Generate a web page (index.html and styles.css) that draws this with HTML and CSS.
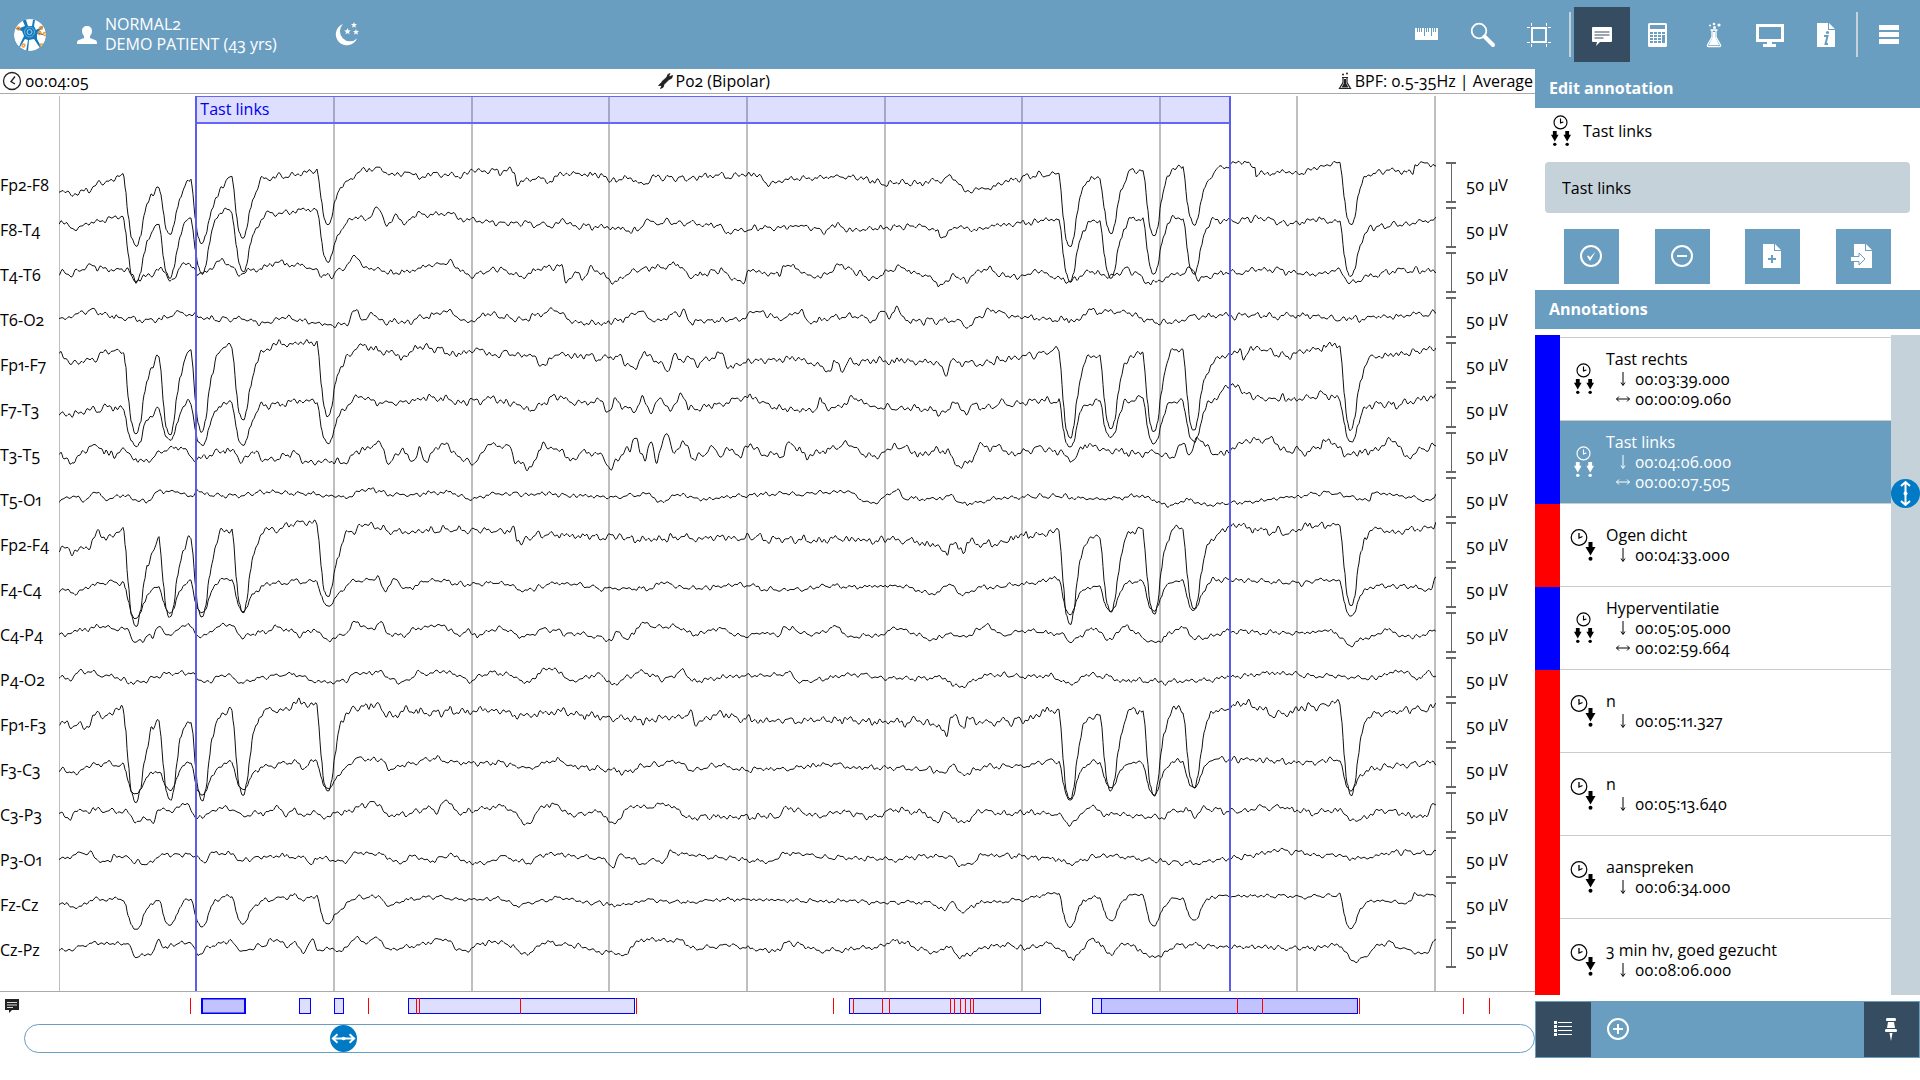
FILE: index.html
```html
<!DOCTYPE html>
<html lang="en">
<head>
<meta charset="utf-8">
<title>EEG review – NORMAL2</title>
<link rel="stylesheet" href="styles.css">
</head>
<body>
<svg class="sprite" aria-hidden="true">
  <symbol id="i-span" viewBox="0 0 22 32">
    <circle cx="11" cy="7" r="6.800" fill="none" stroke="currentColor" stroke-width="1.200"/>
    <path d="M11 3v4.500l3-1" fill="none" stroke="currentColor" stroke-width="1.200"/>
    <path d="M3 16h4v4h2l-4 7-4-7h2zM16 16h4v4h2l-4 7-4-7h2z" fill="currentColor"/>
    <circle cx="5" cy="30" r="1.800" fill="currentColor"/><circle cx="18" cy="30" r="1.800" fill="currentColor"/>
  </symbol>
  <symbol id="i-point" viewBox="0 0 26 32">
    <circle cx="9" cy="8.500" r="7.800" fill="none" stroke="currentColor" stroke-width="1.200"/>
    <path d="M9 4v5l3.500-1.500" fill="none" stroke="currentColor" stroke-width="1.300"/>
    <path d="M18.500 13h4v5h3l-5 8.500-5-8.500h3z" fill="currentColor"/>
    <circle cx="20.500" cy="29.800" r="2" fill="currentColor"/>
  </symbol>
  <symbol id="i-down" viewBox="0 0 16 16"><path d="M8 1v13M6 11.500l2 3 2-3" fill="none" stroke="currentColor"/></symbol>
  <symbol id="i-wide" viewBox="0 0 16 16"><path d="M1.500 8h13M4 5.500L1.500 8 4 10.500M12 5.500L14.500 8 12 10.500" fill="none" stroke="currentColor"/></symbol>
</svg>

<header class="topbar">
  <svg class="logo" viewBox="0 0 32 32" role="img" aria-label="Logo">
    <clipPath id="lc"><circle cx="16" cy="16" r="16"/></clipPath>
    <g clip-path="url(#lc)">
      <circle cx="16" cy="16" r="16" fill="#fff"/>
      <path d="M8 0l3 7-5 2-4 0 0 1 6 2 2 5-3 6-2 5 1 0 5-8 3 1 -1 6-1 6h2l1-12 5-1 6 9 2 3 1-1-6-11 0-5 6 1 0-1-5-2 5-5 0-1-7 4-2-4 1-6h-2l-1 6-4 0-2-6z" fill="#1478be"/>
      <circle cx="15.500" cy="13" r="5" fill="none" stroke="#6ab0dd"/><circle cx="15.500" cy="13" r="2.500" fill="none" stroke="#9fd0ee"/>
      <g fill="none" stroke="#f0962e" stroke-width="1.300"><circle cx="4.500" cy="9.500" r="1.500"/><circle cx="27" cy="9" r="1.500"/><circle cx="25.500" cy="14" r="1.500"/><circle cx="31" cy="15" r="1.500"/><circle cx="9.500" cy="26.500" r="1.500"/><circle cx="27.500" cy="26.500" r="1.500"/></g>
    </g>
  </svg>
  <svg class="user" viewBox="0 0 20 20" aria-hidden="true"><path d="M10 1c3 0 5 2 5 5 0 2-1 4-2 5v2l5 2c2 .6 2 2 2 4H0c0-2 0-3.400 2-4l5-2v-2C6 10 5 8 5 6c0-3 2-5 5-5z" fill="#fff"/></svg>
  <div class="patient"><div>NORMAL2</div><div>DEMO PATIENT (43 yrs)</div></div>
  <button class="night" aria-label="Night mode"><svg viewBox="0 0 26 26"><path d="M9 2a11 11 0 1 0 14 14.500A8.800 8.800 0 0 1 9 2z" fill="#fff"/><path d="M20 0l.8 2 2.200.1-1.700 1.400.6 2.200L20 4.500l-1.900 1.200.6-2.200L17 2.100l2.200-.1zM13.500 6l.9 2.300 2.400.1-1.900 1.500.7 2.400-2.100-1.400-2.100 1.400.7-2.400-1.900-1.500 2.400-.1zM22 7l.8 2 2.200.1-1.700 1.400.6 2.200-1.900-1.200-1.900 1.200.6-2.200L19 9.100l2.200-.1z" fill="#fff"/></svg></button>
  <nav class="tools">
    <button aria-label="Ruler"><svg viewBox="0 0 28 28"><path d="M2 7h2v4h1V7h1v4h1V7h1v4h1V7h2v8h1V7h1v4h1V7h1v4h1V7h2v8h1V7h1v4h1V7h1v4h1V7h2v12H2z" fill="#fff"/></svg></button>
    <button aria-label="Zoom"><svg viewBox="0 0 28 28"><circle cx="10" cy="10" r="7.300" fill="none" stroke="#fff" stroke-width="1.800"/><path d="M15.500 15.500L24 24" stroke="#fff" stroke-width="4" stroke-linecap="round"/></svg></button>
    <button aria-label="Crop"><svg viewBox="0 0 28 28"><path d="M7 7h14v14H7z" fill="none" stroke="#fff" stroke-width="2"/><path d="M2 6.500h3M23 6.500h3M2 21.500h3M23 21.500h3M6.500 2v3M21.500 2v3M6.500 23v3M21.500 23v3" stroke="#fff"/></svg></button>
    <span class="sep"></span>
    <button class="active" aria-label="Annotations"><svg viewBox="0 0 28 28"><path d="M5 6h18q1 0 1 1v13q0 1-1 1H12l-4 4 1-4H5q-1 0-1-1V7q0-1 1-1z" fill="#fff"/><path d="M6.500 11h15M6.500 14h15M6.500 17h9" stroke="#364d61"/></svg></button>
    <button aria-label="Calculator"><svg viewBox="0 0 28 28"><rect x="4" y="2" width="19" height="24" rx="1.500" fill="#fff"/><path d="M6 4h15v4H6zM6 11h3v2H6zM10 11h3v2h-3zM14 11h3v2h-3zM18 11h3v2h-3zM6 14h3v2H6zM10 14h3v2h-3zM14 14h3v2h-3zM6 17h3v2H6zM10 17h3v2h-3zM14 17h3v2h-3zM6 20h3v2H6zM10 20h3v2h-3zM14 20h3v2h-3zM18 14h3v8h-3z" fill="#6a9ec1"/></svg></button>
    <button aria-label="Laboratory"><svg viewBox="0 0 28 28"><path d="M12 9v7l-4.500 8q-.5 1.500 1 1.500h11q1.500 0 1-1.500L16 16V9M10.500 9h7" fill="none" stroke="#fff" stroke-width="1.300"/><path d="M12.800 16h2.400l4 8h-10.400zM12.800 11h2.400v5h-2.400z" fill="#fff"/><circle cx="10" cy="4.500" r="1" fill="#fff"/><circle cx="14" cy="3" r="1.300" fill="#fff"/><circle cx="19" cy="4" r="1.600" fill="#fff"/><circle cx="14.500" cy="6.500" r="1.500" fill="#fff"/></svg></button>
    <button aria-label="Display"><svg viewBox="0 0 28 28"><path d="M0 3h28v18H16v2h4v3H7v-3h4v-2H0zM3 6v12h22V6z" fill="#fff" fill-rule="evenodd"/></svg></button>
    <button aria-label="Info"><svg viewBox="0 0 28 28"><path d="M5 2h11v7h7v17H5zM17 2l6 6h-6z" fill="#fff"/><circle cx="15.500" cy="11.500" r="1.600" fill="#6a9ec1"/><path d="M12 15h3.500l-2 8h2.500" fill="none" stroke="#6a9ec1" stroke-width="2"/></svg></button>
    <span class="sep"></span>
    <button aria-label="Menu"><svg viewBox="0 0 28 28"><path d="M4 4h20v5H4zM4 11h20v5H4zM4 18h20v5H4z" fill="#fff"/></svg></button>
  </nav>
</header>

<main class="workspace">
  <section class="recording">
    <div class="infobar">
      <span class="info"><svg width="20" height="20" viewBox="0 0 20 20"><circle cx="10" cy="10" r="8.500" fill="none" stroke="#222" stroke-width="1.300"/><path d="M13 5.500L9 10.500l4 2.500" fill="none" stroke="#222" stroke-width="1.400"/></svg>00:04:05</span>
      <span class="info"><svg width="16" height="16" viewBox="0 0 16 16"><path d="M1.500 12.500l3-3 .5-1 5-4.500q0-3 3-3.500L12 2.500l1 1 2.500-1q0 3.500-3.500 4l-5 5q0 3.500-3.500 4l1-2-1-1z" fill="#222" stroke="#222" stroke-width=".8"/></svg>P02 (Bipolar)</span>
      <span class="info"><svg width="14" height="18" viewBox="0 0 14 18"><path d="M5 5.500v5L1.500 16.500h11L9 10.500v-5M4 5.500h6" fill="none" stroke="#222" stroke-width="1.200"/><path d="M6 7h2v4l2.500 4.500h-7L6 11z" fill="#222"/><circle cx="5" cy="2.500" r="1" fill="#222"/><circle cx="9" cy="1.500" r="1" fill="#222"/></svg>BPF: 0.5-35Hz | Average</span>
    </div>
    <div class="chart">
      <div class="labels">
        <div>Fp2-F8</div><div>F8-T4</div><div>T4-T6</div><div>T6-O2</div><div>Fp1-F7</div><div>F7-T3</div><div>T3-T5</div><div>T5-O1</div><div>Fp2-F4</div><div>F4-C4</div><div>C4-P4</div><div>P4-O2</div><div>Fp1-F3</div><div>F3-C3</div><div>C3-P3</div><div>P3-O1</div><div>Fz-Cz</div><div>Cz-Pz</div>
      </div>
      <div class="plot">
        <svg class="traces" id="traces" viewBox="0 0 1377 897" preserveAspectRatio="none" role="img" aria-label="EEG traces"></svg>
        <div class="marked"><span>Tast links</span></div>
      </div>
      <div class="scales">
        <div>50 µV</div><div>50 µV</div><div>50 µV</div><div>50 µV</div><div>50 µV</div><div>50 µV</div><div>50 µV</div><div>50 µV</div><div>50 µV</div><div>50 µV</div><div>50 µV</div><div>50 µV</div><div>50 µV</div><div>50 µV</div><div>50 µV</div><div>50 µV</div><div>50 µV</div><div>50 µV</div>
      </div>
    </div>
    <div class="timeline">
      <svg width="16" height="16" viewBox="0 0 16 16" aria-hidden="true"><path d="M1 1h14v11H8l-3 3v-3H1z" fill="#222"/><path d="M3 4.500h10M3 7h10M3 9.500h6" stroke="#ddd"/></svg>
      <svg class="track" viewBox="0 0 1511 16" preserveAspectRatio="none">
        <g stroke="#0000ff" fill="#dedeff">
          <rect x="178" y=".5" width="43" height="15" fill="#c2c2ff" stroke-width="2"/>
          <rect x="275.500" y=".5" width="11" height="15"/><rect x="310.500" y=".5" width="9" height="15"/>
          <rect x="384.500" y=".5" width="226" height="15"/><rect x="825.500" y=".5" width="191" height="15"/>
          <rect x="1068.500" y=".5" width="265" height="15"/><rect x="1077.500" y=".5" width="256" height="15" fill="#c2c2ff"/>
        </g>
        <path stroke="#ff0000" d="M166.500 0v16M344.500 0v16M392.500 0v16M395.500 0v16M496.500 0v16M612.500 0v16M809.500 0v16M829.500 0v16M858.500 0v16M865.500 0v16M926.500 0v16M930.500 0v16M936.500 0v16M941.500 0v16M946.500 0v16M949.500 0v16M1213.500 0v16M1238.500 0v16M1335.500 0v16M1439.500 0v16M1465.500 0v16"/>
      </svg>
    </div>
    <input class="seek" type="range" min="0" max="1000" value="206" aria-label="Position in recording">
  </section>

  <aside class="side">
    <h2>Edit annotation</h2>
    <div class="kind"><svg class="span"><use href="#i-span"/></svg><span>Tast links</span></div>
    <input class="name" type="text" value="Tast links" aria-label="Annotation text">
    <div class="actions">
      <button aria-label="Accept"><svg viewBox="0 0 26 26"><circle cx="13" cy="13" r="10" fill="none" stroke="#fff" stroke-width="2"/><path d="M9 13l1.500-.5 1.500 2 5.500-6-5 9h-1z" fill="#fff"/></svg></button>
      <button aria-label="Remove"><svg viewBox="0 0 26 26"><circle cx="13" cy="13" r="10" fill="none" stroke="#fff" stroke-width="2"/><path d="M8 13h10" stroke="#fff" stroke-width="2"/></svg></button>
      <button aria-label="Add to report"><svg viewBox="0 0 26 26"><path d="M4 1h11v7h7v17H4zM16 1l6 6h-6z" fill="#fff"/><path d="M13 12v8M9 16h8" stroke="#6a9ec1" stroke-width="2"/></svg></button>
      <button aria-label="Export"><svg viewBox="0 0 26 26"><path d="M4 1h11v7h7v17H4zM16 1l6 6h-6z" fill="#fff"/><path d="M1 14h8v-4l6 6-6 6v-4H1z" fill="#fff"/><path d="M4 13.500h5v-3.500l6 6-6 6v-3.500H4" fill="none" stroke="#6a9ec1"/></svg></button>
    </div>
    <h2>Annotations</h2>
    <div class="listbox">
      <ul class="list">
        <li class="blue cut" aria-hidden="true"><div class="body"></div></li>
        <li class="blue"><div class="body"><span class="icon"><svg class="span"><use href="#i-span"/></svg></span><div class="text"><div>Tast rechts</div><div class="t"><svg><use href="#i-down"/></svg>00:03:39.000</div><div class="t"><svg><use href="#i-wide"/></svg>00:00:09.060</div></div></div></li>
        <li class="blue selected"><div class="body"><span class="icon"><svg class="span"><use href="#i-span"/></svg></span><div class="text"><div>Tast links</div><div class="t"><svg><use href="#i-down"/></svg>00:04:06.000</div><div class="t"><svg><use href="#i-wide"/></svg>00:00:07.505</div></div></div></li>
        <li class="red"><div class="body"><span class="icon"><svg class="point"><use href="#i-point"/></svg></span><div class="text"><div>Ogen dicht</div><div class="t"><svg><use href="#i-down"/></svg>00:04:33.000</div></div></div></li>
        <li class="blue"><div class="body"><span class="icon"><svg class="span"><use href="#i-span"/></svg></span><div class="text"><div>Hyperventilatie</div><div class="t"><svg><use href="#i-down"/></svg>00:05:05.000</div><div class="t"><svg><use href="#i-wide"/></svg>00:02:59.664</div></div></div></li>
        <li class="red"><div class="body"><span class="icon"><svg class="point"><use href="#i-point"/></svg></span><div class="text"><div>n</div><div class="t"><svg><use href="#i-down"/></svg>00:05:11.327</div></div></div></li>
        <li class="red"><div class="body"><span class="icon"><svg class="point"><use href="#i-point"/></svg></span><div class="text"><div>n</div><div class="t"><svg><use href="#i-down"/></svg>00:05:13.640</div></div></div></li>
        <li class="red"><div class="body"><span class="icon"><svg class="point"><use href="#i-point"/></svg></span><div class="text"><div>aanspreken</div><div class="t"><svg><use href="#i-down"/></svg>00:06:34.000</div></div></div></li>
        <li class="red"><div class="body"><span class="icon"><svg class="point"><use href="#i-point"/></svg></span><div class="text"><div>3 min hv, goed gezucht</div><div class="t"><svg><use href="#i-down"/></svg>00:08:06.000</div></div></div></li>
      </ul>
      <input class="vseek" type="range" min="0" max="1000" value="228" aria-label="Scroll annotations">
    </div>
    <div class="footer">
      <button class="dark" aria-label="List"><svg viewBox="0 0 26 26"><path d="M8 6.500h14M8 10.500h14M8 14.500h14M8 18.500h14" stroke="#fff"/><path d="M4 5h3v3H4zM4 9h3v3H4zM4 13h3v3H4zM4 17h3v3H4z" fill="#fff"/></svg></button>
      <button aria-label="Add"><svg viewBox="0 0 26 26"><circle cx="13" cy="13" r="10" fill="none" stroke="#fff" stroke-width="2"/><path d="M8 13h10M13 8v10" stroke="#fff" stroke-width="2"/></svg></button>
      <button class="dark pin" aria-label="Pin"><svg viewBox="0 0 26 26"><path d="M9 2h8q1 0 1 1.500T17 5H9Q8 5 8 3.500T9 2zM10 6h6l1 6H9zM8 13h10q1 0 1 1.500T18 16H8q-1 0-1-1.500T8 13zM11.500 17h3L13 25z" fill="#fff"/></svg></button>
    </div>
  </aside>
</main>
<script src="app.js"></script>
</body>
</html>
```
FILE: styles.css
```css
* { box-sizing: border-box; }

body {
  margin: 0;
  background: #fff;
  color: #000;
  font: 16px/20px "Open Sans", "Noto Sans", sans-serif;
  font-variant-numeric: oldstyle-nums proportional-nums;
}

button {
  border: 0;
  padding: 0;
  background: none;
  display: flex;
  align-items: center;
  justify-content: center;
}

.sprite { display: none; }

/* top bar */
.topbar {
  display: flex;
  align-items: center;
  height: 69px;
  padding: 0 3px 0 14px;
  background: #6a9ec1;
  color: #fff;
}
.logo { width: 32px; height: 32px; margin-right: 31px; }
.user { width: 20px; height: 20px; margin-right: 8px; }
.patient { padding-bottom: 1px; }
.night { margin-left: 57px; }
.night svg { width: 26px; height: 26px; }
.tools { display: flex; align-items: center; margin-left: auto; }
.tools button { width: 56px; height: 55px; }
.tools svg { width: 28px; height: 28px; }
.tools .active { background: #364d61; }
.sep { width: 2px; height: 45px; margin: 0 3px 0 2px; background: #c6d2da; }

.workspace {
  display: grid;
  grid-template-columns: minmax(0, 1fr) 385px;
  align-items: start;
}

/* recording */
.infobar {
  display: flex;
  justify-content: space-between;
  align-items: center;
  height: 25px;
  padding: 0 2px;
  border-bottom: 1px solid #aaa;
}
.info { display: flex; align-items: center; gap: 3px; }

.chart {
  display: grid;
  grid-template-columns: 59px minmax(0, 1fr) 99px;
  border-bottom: 1px solid #aaa;
}
.labels, .scales { padding: 69px 0 18px; }
.labels div, .scales div { height: 45px; line-height: 45px; white-space: nowrap; }
.scales div {
  display: flex;
  gap: 10px;
  padding-left: 10px;
}
.scales div::before {
  content: "";
  width: 10px;
  height: 41px;
  margin-top: -1px;
  background:
    linear-gradient(#666, #666) top / 100% 2px no-repeat,
    linear-gradient(#666, #666) bottom / 100% 2px no-repeat,
    linear-gradient(#666, #666) center / 1px 100% no-repeat;
}
.plot { position: relative; }
.traces { display: block; width: 100%; height: 897px; }
.traces line, .traces polyline { vector-effect: non-scaling-stroke; fill: none; }
.traces polyline { stroke: #111; stroke-width: 1; }
.traces .grid { stroke: #bfbfbf; stroke-width: 2; }
.marked {
  position: absolute;
  top: 2px;
  bottom: 0;
  left: 9.9%;
  right: 14.9%;
  border: solid #5c5cee;
  border-width: 0 2px;
}
.marked span {
  display: block;
  height: 28px;
  line-height: 25px;
  padding-left: 3px;
  border: solid #6666ff;
  border-width: 1px 0 2px;
  background: rgba(0, 0, 255, .13);
  color: #0000f0;
}

.timeline {
  display: flex;
  gap: 4px;
  align-items: center;
  height: 32px;
  padding: 0 0 4px 4px;
}
.track { flex: 1; height: 16px; min-width: 0; }

input[type=range] {
  display: block;
  margin: 0;
  appearance: none;
  -webkit-appearance: none;
  outline: 0;
}
.recording .seek {
  width: calc(100% - 24px);
  height: 29px;
  margin: 0 0 5px 24px;
  border: 1px solid #6a9ec1;
  border-radius: 15px;
  background: #fff;
}
input[type=range]::-webkit-slider-thumb {
  -webkit-appearance: none;
  width: 27px;
  height: 27px;
  border-radius: 50%;
  background: #007ac5 url("data:image/svg+xml,%3Csvg xmlns='http://www.w3.org/2000/svg' viewBox='0 0 29 29'%3E%3Cpath d='M3 14.5h23M8 10l-5 4.500 5 4.500M21 10l5 4.500-5 4.500' fill='none' stroke='%23fff' stroke-width='2'/%3E%3Ccircle cx='14.5' cy='14.5' r='2' fill='%23fff'/%3E%3C/svg%3E") center / 100% no-repeat;
}

/* side panel */
.side h2 {
  margin: 0;
  padding-left: 14px;
  font-size: 16px;
  font-weight: 700;
  line-height: 39px;
  background: #6a9ec1;
  color: #fff;
}
.kind {
  display: flex;
  align-items: center;
  gap: 12px;
  height: 46px;
  padding-left: 15px;
}
.span { width: 21px; height: 32px; }
.point { width: 26px; height: 32px; }
.name {
  display: block;
  width: 365px;
  height: 51px;
  margin: 8px 10px 16px;
  padding: 0 17px;
  border: 0;
  border-radius: 4px;
  background: #c6d2da;
  font: inherit;
}
.actions {
  display: flex;
  justify-content: space-between;
  padding: 0 29px 6px;
}
.actions button, .footer button { width: 55px; height: 55px; background: #6a9ec1; }
.actions svg, .footer svg { width: 26px; height: 26px; margin: 0 1px 1px 0; }

.listbox {
  display: grid;
  grid-template-columns: minmax(0, 1fr) 29px;
  height: calc(100vh - 420px);
  margin: 6px 0;
}
.list {
  margin: 0;
  padding: 0;
  list-style: none;
  height: 100%;
  overflow: hidden;
}
.list li { height: 83px; padding-left: 25px; }
.list .cut { height: 3px; }
.blue { background: #0000ff; }
.red { background: #ff0000; }
.body {
  display: flex;
  align-items: center;
  height: 100%;
  border-bottom: 1px solid #ccc;
  background: #fff;
}
.selected .body { background: #6a9ec1; color: #fff; }
.icon { display: flex; justify-content: center; width: 46px; }
.text { padding-bottom: 1px; }
.t { display: flex; align-items: center; padding-left: 9px; gap: 4px; }
.t svg { width: 16px; height: 16px; }
.vseek {
  writing-mode: vertical-lr;
  width: 29px;
  height: 100%;
  background: #c6d2da;
}
.side .vseek::-webkit-slider-thumb {
  width: 29px;
  height: 29px;
  background-image: url("data:image/svg+xml,%3Csvg xmlns='http://www.w3.org/2000/svg' viewBox='0 0 29 29'%3E%3Cpath d='M14.500 3v23M10 7l4.500-4 4.500 4M10 22l4.500 4 4.500-4' fill='none' stroke='%23fff' stroke-width='2'/%3E%3Ccircle cx='14.5' cy='14.5' r='2' fill='%23fff'/%3E%3C/svg%3E");
}
.footer {
  display: flex;
  height: 57px;
  border: 1px solid #6a9ec1;
  background: #6a9ec1;
}
.footer .dark { background: #364d61; }
.footer .pin { margin-left: auto; }
```
FILE: app.js
```js
// Trace data: y is given in px from the top of the window area, x likewise;
// both are shifted into the plot's own coordinates when drawn.
const X0 = 59, Y0 = 94;
const blinks = [136, 170, 202, 243, 328, 1070, 1111, 1154, 1194, 1351];
const shape = [[-11, 0], [-9, .2], [-7, .55], [-4, .88], [-1, 1], [1, 1], [4, .85], [7, .52], [10, .3], [14, .12], [19, 0]];

// base: x,y pairs of the slow course; low: y reached at each blink; n: noise height
const channels = [
  { n: 2.4, base: [59,191,75,194,88,191,95,183,110,181,120,176,155,188,180,181,190,179,215,194,232,177,255,182,262,179,285,176,318,171,343,181,350,181,360,171,377,167,390,174,415,173,419,180,430,174,465,176,472,171,514,171,517,184,530,179,552,180,562,174,600,175,610,180,625,178,640,183,660,177,690,178,720,176,756,174,765,183,800,178,850,177,880,182,885,183,940,182,951,176,966,191,990,187,1010,180,1030,176,1060,173,1095,178,1135,171,1180,167,1208,176,1220,168,1240,161,1255,166,1256,175,1300,172,1320,166,1340,162,1370,172,1400,172,1413,174,1415,164,1436,166], low: [245,234,243,238,224,247,233,236,225,225] },
  { n: 2.4, base: [59,222,77,228,90,222,120,217,155,224,190,218,225,211,255,220,275,213,313,210,342,225,355,216,365,220,377,210,387,225,396,216,405,223,418,214,445,214,470,220,500,223,556,225,562,218,570,225,600,226,638,231,645,222,720,225,724,231,800,226,825,232,836,223,845,230,900,227,925,226,945,236,955,227,975,229,1000,225,1060,220,1090,222,1135,219,1180,217,1230,221,1260,218,1290,224,1320,220,1370,228,1400,225,1436,220], low: [282,278,273,271,261,281,278,273,273,277] },
  { n: 2.4, base: [59,271,68,274,90,266,110,270,126,269,136,281,150,275,160,269,172,279,185,262,200,274,222,261,240,273,260,269,275,263,300,266,328,276,345,268,355,255,365,268,400,273,435,265,447,262,470,275,500,270,520,277,545,267,562,267,566,281,578,272,582,278,592,269,615,282,635,270,680,265,690,276,720,272,742,281,750,271,780,275,784,265,820,278,838,267,875,278,900,267,920,275,945,284,955,273,962,281,985,269,1010,277,1040,272,1070,281,1090,271,1111,276,1125,270,1152,282,1180,275,1190,270,1198,279,1230,272,1270,270,1320,274,1335,270,1351,282,1375,275,1400,270,1436,271], low: [] },
  { n: 2.4, base: [59,316,66,320,76,312,95,311,115,317,136,320,160,319,178,312,197,316,210,320,240,319,260,324,290,318,328,325,347,325,355,310,365,322,372,310,380,321,400,322,448,312,465,322,490,314,520,321,555,310,575,322,605,323,640,313,655,320,684,312,690,321,745,320,752,311,780,318,802,311,808,322,850,315,875,321,882,310,890,319,897,306,903,320,925,321,960,320,964,326,995,310,1010,317,1080,320,1085,311,1120,312,1165,323,1200,317,1250,315,1300,316,1350,319,1400,316,1436,313], low: [] },
  { n: 3, base: [59,350,64,360,78,363,95,358,105,352,120,350,155,358,190,352,220,350,230,347,255,353,280,345,315,342,345,357,360,347,380,350,396,354,400,359,420,347,435,349,455,354,475,350,495,355,505,352,525,355,543,364,560,354,580,356,605,358,620,358,634,369,643,354,652,356,668,371,674,358,700,362,720,355,730,366,750,361,800,360,830,370,836,360,843,370,850,362,900,360,935,362,947,374,951,360,980,364,1010,359,1060,350,1092,356,1140,355,1176,350,1210,362,1225,355,1240,351,1244,362,1250,348,1290,356,1310,350,1341,345,1375,358,1400,354,1436,349], low: [433,434,432,421,416,438,429,433,430,430] },
  { n: 3, base: [59,413,70,416,90,411,110,406,120,408,152,410,185,402,212,409,228,402,262,406,290,404,312,400,342,408,360,396,385,402,410,402,430,398,460,403,490,398,505,402,527,409,560,396,575,403,600,401,609,411,615,402,635,409,642,399,650,410,661,399,670,412,680,396,690,408,755,397,765,405,790,409,815,410,820,402,832,410,855,400,880,408,920,408,945,413,952,402,966,413,975,406,1020,403,1055,400,1090,402,1135,399,1172,400,1210,400,1230,386,1240,390,1260,399,1300,399,1325,396,1370,405,1400,404,1436,396], low: [446,440,446,446,443,447,438,444,443,443] },
  { n: 3, base: [59,453,70,462,95,445,110,455,125,450,138,462,150,460,160,450,180,446,196,460,215,452,235,451,241,462,250,452,270,460,292,453,310,463,328,462,345,464,358,450,378,444,390,462,403,451,413,460,420,450,425,460,443,444,460,458,473,464,488,446,509,446,516,460,527,468,534,462,544,441,551,451,562,448,568,460,590,452,603,458,611,469,617,458,630,450,634,438,637,441,641,457,645,456,651,442,656,461,664,436,667,433,673,451,685,446,695,458,715,448,720,458,730,446,740,458,747,445,765,455,783,455,786,444,810,455,845,445,872,456,900,446,920,455,945,450,960,466,970,463,980,446,1000,447,1010,456,1040,447,1062,452,1074,459,1085,445,1120,452,1150,454,1170,456,1185,443,1190,454,1197,440,1222,456,1232,448,1250,440,1270,441,1290,452,1310,450,1330,442,1350,455,1370,450,1395,442,1405,456,1436,446], low: [] },
  { n: 1.8, base: [59,501,75,496,83,502,93,492,108,499,125,496,145,502,160,492,180,492,192,499,197,490,205,495,240,496,265,492,310,494,345,497,365,490,400,495,445,492,470,499,490,494,540,494,620,497,650,494,658,502,680,495,700,499,720,497,780,494,845,492,872,504,898,490,905,499,940,498,950,496,965,504,1000,498,1050,496,1100,499,1140,496,1170,506,1190,499,1205,505,1230,503,1260,501,1280,498,1330,493,1370,500,1372,493,1410,496,1425,501,1436,496], low: [] },
  { n: 3, base: [59,547,75,551,88,546,97,535,108,540,120,532,155,540,190,537,220,534,232,531,258,535,272,530,300,523,318,524,342,537,350,531,370,525,390,531,405,533,430,531,465,531,500,530,514,531,517,541,540,534,600,536,640,539,700,538,750,538,800,540,860,540,900,540,935,545,947,553,950,541,965,551,967,543,985,545,1020,537,1062,531,1095,538,1135,531,1178,529,1210,537,1235,526,1260,530,1290,532,1320,525,1340,525,1370,530,1400,532,1436,525], low: [625,617,618,612,597,625,612,614,609,606] },
  { n: 1.8, base: [59,590,78,592,95,585,110,582,126,582,158,586,185,582,230,580,255,587,275,583,300,581,313,581,340,590,355,581,378,578,385,590,396,580,405,588,430,580,465,584,500,583,525,590,560,583,600,588,645,589,665,583,690,588,740,585,780,590,835,586,845,587,900,586,935,594,950,584,960,595,985,587,1030,584,1055,578,1090,587,1135,581,1180,581,1230,580,1300,583,1335,580,1370,587,1400,586,1430,590,1436,576], low: [618,613,613,611,606,614,611,611,610,616] },
  { n: 2, base: [59,632,66,637,76,630,98,627,126,628,136,643,152,636,158,628,170,635,187,625,200,637,226,624,243,636,265,632,275,627,300,634,312,629,330,640,345,632,357,622,370,631,380,622,387,633,403,635,420,628,440,625,462,635,468,629,474,636,500,628,525,637,545,629,575,634,612,639,618,632,627,640,642,625,680,627,690,634,720,629,740,636,770,633,780,637,784,627,810,635,838,627,850,637,880,636,895,628,935,640,945,634,965,637,984,626,1005,635,1020,630,1060,634,1070,642,1093,628,1111,639,1125,626,1152,642,1185,628,1195,639,1230,631,1300,633,1330,630,1350,644,1375,636,1385,629,1410,637,1436,631], low: [] },
  { n: 2, base: [59,675,69,679,80,671,110,676,136,683,155,678,165,674,190,673,204,682,225,675,243,682,270,677,295,674,315,682,345,681,355,673,378,673,400,682,420,673,450,672,470,680,490,673,500,672,527,682,548,668,562,672,568,681,600,675,614,685,628,677,640,671,665,680,682,671,695,681,740,676,775,675,790,672,800,682,825,679,850,674,895,678,940,678,960,686,985,675,1055,677,1070,684,1090,675,1130,681,1170,682,1190,681,1230,677,1270,673,1330,676,1370,678,1400,671,1420,679,1428,670,1436,679], low: [] },
  { n: 3.4, base: [59,723,75,727,88,726,99,710,104,719,115,711,155,720,190,718,220,713,232,710,265,712,280,708,300,703,318,707,345,713,360,707,378,706,387,716,410,711,450,712,500,711,520,715,570,712,600,717,640,720,690,715,695,723,720,716,760,721,830,720,900,722,935,722,946,736,951,717,965,727,967,720,985,724,1020,721,1050,711,1092,716,1138,710,1180,709,1215,712,1240,704,1280,714,1310,707,1340,703,1370,715,1390,713,1436,707], low: [802,800,800,795,791,800,790,795,788,795] },
  { n: 2.2, base: [59,768,74,774,95,764,126,764,156,770,187,762,212,768,230,762,262,768,295,761,304,769,312,761,340,770,358,758,380,760,390,768,410,764,435,759,465,764,495,762,530,768,560,760,575,767,612,770,625,772,650,765,680,762,690,770,720,765,745,770,780,769,840,764,850,767,900,768,935,770,945,774,952,764,962,775,985,767,1020,766,1055,760,1090,762,1135,762,1180,761,1230,759,1265,761,1300,763,1335,760,1370,769,1400,766,1436,761], low: [794,790,795,790,789,800,788,795,788,790] },
  { n: 2.4, base: [59,812,70,820,76,811,98,810,126,811,136,820,153,821,158,811,178,809,186,803,196,818,222,808,235,808,241,817,265,813,277,807,285,815,295,810,303,817,313,810,320,817,345,812,362,805,378,803,387,815,403,815,430,808,436,812,446,799,458,813,480,810,500,806,514,812,527,824,545,804,560,806,570,816,600,811,611,824,633,806,650,808,668,804,690,817,740,817,778,817,784,808,812,815,840,812,875,817,895,810,920,812,937,822,945,812,962,823,985,811,1015,814,1055,813,1070,823,1090,808,1115,815,1155,817,1185,810,1195,816,1205,808,1230,811,1280,808,1310,812,1340,810,1352,821,1385,810,1405,814,1425,816,1434,804,1436,806], low: [] },
  { n: 2, base: [59,857,68,859,75,854,90,853,102,862,120,856,136,862,152,864,160,854,195,856,203,861,212,854,230,853,243,861,255,857,290,856,305,858,310,864,318,858,345,863,355,853,378,854,400,863,414,856,430,861,450,854,472,863,492,863,500,856,527,862,545,854,605,859,614,867,620,855,645,864,652,858,660,864,670,853,720,858,770,861,785,853,830,858,870,858,895,860,920,856,950,857,958,865,972,864,980,855,1050,858,1070,864,1095,856,1130,857,1165,862,1195,863,1240,857,1280,851,1330,855,1360,859,1400,852,1436,853], low: [] },
  { n: 1.6, base: [59,903,66,905,78,908,95,899,126,899,157,900,192,898,225,897,232,896,258,901,285,898,296,896,303,901,312,896,342,907,355,898,378,897,387,905,410,900,430,897,480,900,500,898,520,905,540,901,560,898,580,902,620,905,650,900,690,903,720,899,780,900,840,901,900,903,930,903,945,911,952,900,960,911,985,902,1020,900,1055,893,1092,898,1135,895,1180,899,1210,896,1260,896,1300,897,1340,895,1370,901,1410,902,1415,894,1436,895], low: [929,925,927,924,924,927,921,926,920,928] },
  { n: 2, base: [59,948,69,953,76,947,98,943,126,943,136,957,153,953,158,941,165,948,187,942,200,954,208,947,230,942,243,951,262,946,276,939,288,948,293,943,303,951,312,940,318,950,345,949,355,938,365,943,378,938,390,951,403,947,445,939,462,951,480,944,500,942,527,954,545,943,580,946,605,953,615,953,620,956,642,940,680,940,695,949,725,945,765,950,779,952,784,942,820,950,870,948,895,941,935,953,948,947,962,957,985,948,1000,945,1030,948,1050,944,1073,958,1092,940,1111,954,1125,944,1155,957,1180,945,1230,947,1300,948,1340,945,1352,962,1388,943,1400,948,1425,954,1436,939], low: [] },
];

// eased value between the listed points
function at(p, x) {
  if (x <= p[0]) return p[1];
  for (let i = 2; i < p.length; i += 2) {
    if (x <= p[i]) {
      const t = (x - p[i - 2]) / (p[i] - p[i - 2]);
      return p[i - 1] + (p[i + 1] - p[i - 1]) * t * t * (3 - 2 * t);
    }
  }
  return p[p.length - 1];
}
const flat = shape.flat();

let seed = 7;
const rnd = () => (seed = (seed * 16807) % 2147483647) / 2147483647 - .5;

// turning points alternate up and down, so the line keeps rippling
function noise(min, max) {
  const p = [];
  let side = 1;
  for (let x = X0; x < 1450; x += min + (rnd() + .5) * (max - min)) {
    p.push(x, side * (.1 + (rnd() + .5) * .9));
    side = -side;
  }
  return p;
}

const ns = "http://www.w3.org/2000/svg";
const svg = document.getElementById("traces");
for (let i = 0; i <= 10; i++) {
  if (i === 1) continue; // covered by the start line of the marked span
  const l = document.createElementNS(ns, "line");
  const x = Math.round(i * 137.6);
  l.setAttribute("class", "grid");
  l.setAttribute("x1", x); l.setAttribute("x2", x);
  l.setAttribute("y1", 2); l.setAttribute("y2", 897);
  svg.append(l);
}
for (const c of channels) {
  const fine = noise(2, 4), slow = noise(4, 10);
  const pts = [];
  for (let x = X0; x <= 1436; x++) {
    let y = at(c.base, x);
    let f = 0;
    c.low.forEach((low, k) => {
      const s = at(flat, (x - blinks[k]) / (k === 0 ? 1.15 : 1));
      if (s > f) { f = s; y = at(c.base, x) * (1 - s) + low * s; }
    });
    y += (at(fine, x) * .9 + at(slow, x) * 1.2) * c.n * (1 - f * .6);
    pts.push((x - X0) + "," + (y - Y0).toFixed(1));
  }
  const p = document.createElementNS(ns, "polyline");
  p.setAttribute("points", pts.join(" "));
  svg.append(p);
}
```
